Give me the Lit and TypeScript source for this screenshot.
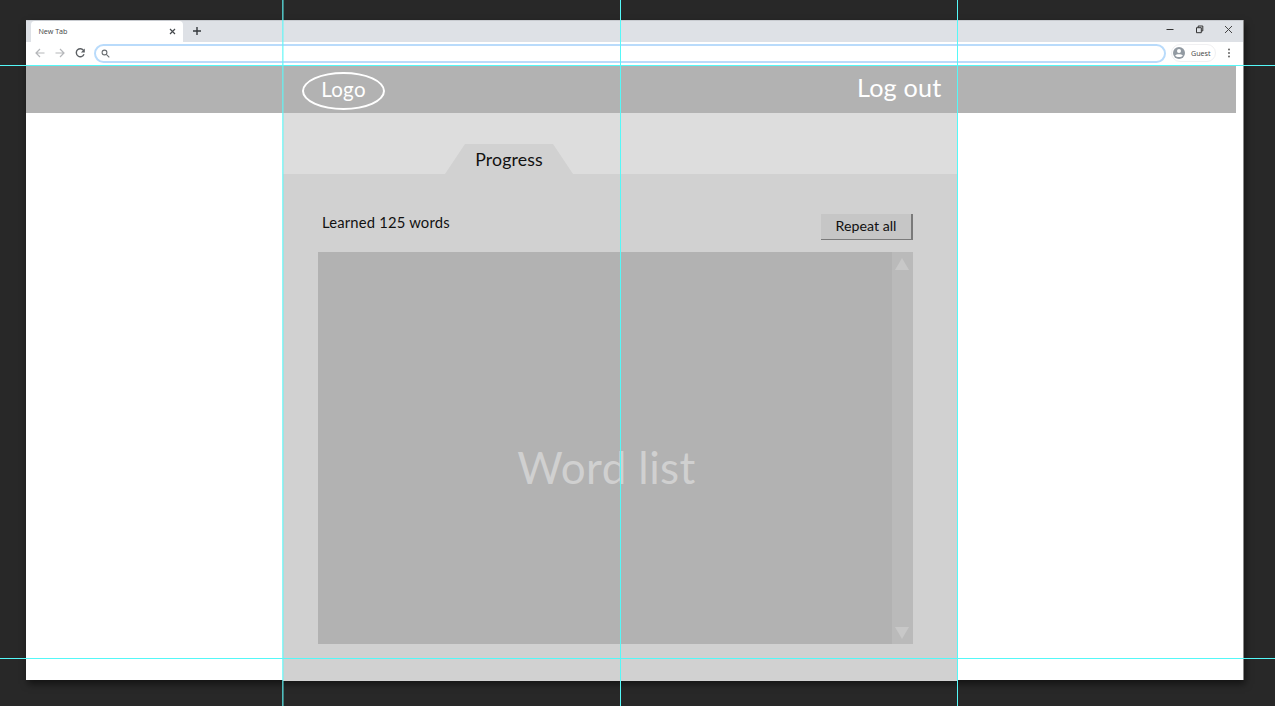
import { LitElement, html, css } from "lit";
import { customElement } from "lit/decorators.js";

@customElement("browser-chrome")
class BrowserChrome extends LitElement {
  static styles = css`
    :host { display: block; font-family: "Open Sans", sans-serif; color: #444; }
    svg { display: block; fill: none; flex: none; }
    .strip { height: 21.5px; box-sizing: border-box; background: #dee1e6; display: flex; padding: 0 10px 0 5px; border-top: 1px solid #c8cbd0; }
    .tab { width: 152px; box-sizing: border-box; background: #fff; border-radius: 4px 4px 0 0; display: flex; align-items: center; justify-content: space-between; padding: 0 7px 0 7.5px; font-size: 7.2px; letter-spacing: -0.05px; }
    .plus { margin: 6px 0 0 10px; }
    .controls { margin-left: auto; display: flex; padding-top: 4px; gap: 20.5px; }
    .bar { height: 23.5px; box-sizing: border-box; display: flex; align-items: center; padding: 0 0 0.5px 8.5px; background: #fff; }
    .nav { display: flex; gap: 10px; }
    .address { width: 1072px; height: 19px; box-sizing: border-box; border: 2px solid #b9dbfb; border-radius: 10px; margin-left: 8px; display: flex; align-items: center; padding-left: 5px; }
    .guest { width: 45px; height: 18px; box-sizing: border-box; border: 1px solid #f0f0f2; border-radius: 9px; display: flex; align-items: center; gap: 6px; margin-left: 5.5px; padding-left: 1px; font-size: 7.2px; letter-spacing: -0.05px; }
    .menu { margin-left: 11px; }
  `;
  render() {
    return html`
      <div class="strip">
        <div class="tab"><span>New Tab</span>
          <svg width="7" height="7" stroke="#45494d" stroke-width="1.2"><path d="M1 1l5 5M6 1l-5 5" /></svg>
        </div>
        <svg class="plus" width="8" height="8" stroke="#35393d" stroke-width="1.4"><path d="M4 0v8M0 4h8" /></svg>
        <div class="controls">
          <svg width="9" height="9" stroke="#333"><path d="M1.5 4.5h7" /></svg>
          <svg width="9" height="9" stroke="#333"><path d="M1.5 2.7h4.8v5h-4.8zM3.2 2.5V1h4.6v4.9H6.4" /></svg>
          <svg width="9" height="9" stroke="#444"><path d="M1 1l7 7M8 1L1 8" /></svg>
        </div>
      </div>
      <div class="bar">
        <div class="nav">
          <svg width="10" height="10" stroke="#b5b7ba" stroke-width="1.2"><path d="M9.5 5H1M5 1L1 5l4 4" /></svg>
          <svg width="10" height="10" stroke="#b5b7ba" stroke-width="1.2"><path d="M.5 5H9M5 1l4 4-4 4" /></svg>
          <svg width="11" height="10" stroke="#5c6064" stroke-width="1.4"><path d="M8.7 2.6A4 4 0 1 0 9 6.3" /><path d="M9.8 .5v4H5.9z" fill="#5c6064" stroke="none" /></svg>
        </div>
        <div class="address">
          <svg width="9" height="9" stroke="#686c70" stroke-width="1.1"><circle cx="3.5" cy="3.5" r="2.4" /><path d="M5.3 5.3l3 3" /></svg>
        </div>
        <div class="guest">
          <svg width="12" height="12"><circle cx="6" cy="6" r="6" fill="#929aa2" /><circle cx="6" cy="4.1" r="2" fill="#fff" /><path d="M2.2 8.6C3.2 6.9 8.8 6.9 9.8 8.6 8.5 10.6 3.5 10.6 2.2 8.6z" fill="#fff" /></svg>
          <span>Guest</span>
        </div>
        <svg class="menu" width="4" height="10"><circle cx="2" cy="1.5" r=".9" fill="#555" /><circle cx="2" cy="5" r=".9" fill="#555" /><circle cx="2" cy="8.5" r=".9" fill="#555" /></svg>
      </div>
    `;
  }
}

@customElement("progress-page")
class ProgressPage extends LitElement {
  static styles = css`
    :host { display: block; font-family: Lato, sans-serif; color: #111; }
    svg { display: block; }
    .header { width: 1210px; height: 48px; box-sizing: border-box; background: #b2b2b2; color: #fff; display: flex; justify-content: space-between; padding: 7px 294.5px 0 276px; }
    .logo { width: 83px; height: 38px; box-sizing: border-box; border: 2px solid #fff; border-radius: 50%; font-size: 20.5px; line-height: 30px; letter-spacing: 0.3px; text-align: center; }
    .logout { font-size: 25.2px; line-height: 31px; letter-spacing: 0.2px; white-space: nowrap; }
    .content { width: 675px; height: 568px; margin-left: 257px; background: #d1d1d1; }
    .tabs { height: 61px; background: #ddd; padding-left: 162px; box-sizing: border-box; padding-top: 31px; }
    .tab { width: 128px; height: 30px; background: #d1d1d1; clip-path: polygon(20px 0, 108px 0, 100% 100%, 0 100%); text-align: center; font-size: 17.7px; letter-spacing: 0.15px; line-height: 31px; }
    .body { padding: 40px 45px 0 35px; }
    .row { height: 38px; display: flex; justify-content: space-between; align-items: flex-start; }
    .learned { font-size: 14.8px; letter-spacing: 0.18px; line-height: 16px; padding-left: 4px; white-space: nowrap; }
    .repeat { width: 92px; height: 26px; box-sizing: border-box; border: 0 solid #7a7a7a; border-width: 0 2px 1.5px 0; background: #c6c6c6; font-size: 14.2px; line-height: 24px; text-align: center; white-space: nowrap; }
    .list { height: 392px; display: flex; background: #b2b2b2; }
    .words { flex: 1; display: flex; align-items: center; justify-content: center; font-size: 44px; letter-spacing: 0.4px; color: #d0d0d0; padding: 37px 0 0 3px; white-space: nowrap; }
    .scroll { width: 21px; box-sizing: border-box; background: #bababa; display: flex; flex-direction: column; justify-content: space-between; align-items: center; padding: 6px 1px 5px 0; }
  `;
  render() {
    return html`
      <div class="header"><div class="logo">Logo</div><div class="logout">Log out</div></div>
      <div class="content">
        <div class="tabs"><div class="tab">Progress</div></div>
        <div class="body">
          <div class="row"><div class="learned">Learned 125 words</div><div class="repeat">Repeat all</div></div>
          <div class="list">
            <div class="words">Word list</div>
            <div class="scroll">
              <svg width="14" height="12"><path d="M7 0l7 12H0z" fill="#c8c8c8" /></svg>
              <svg width="14" height="12"><path d="M0 0h14L7 12z" fill="#c8c8c8" /></svg>
            </div>
          </div>
        </div>
      </div>
    `;
  }
}

@customElement("app-root")
class AppRoot extends LitElement {
  static styles = css`
    :host { display: block; position: relative; width: 1275px; height: 706px; overflow: hidden; background: #282828; box-sizing: border-box; padding: 20px 0 0 26px; }
    .window { width: 1217px; height: 660px; background: #fff; box-shadow: 1px 0 0 #888, 2px 4px 7px #0008; }
    .guide { position: absolute; background: #55f8f8; }
    .h { left: 0; right: 0; height: 1px; }
    .v { top: 0; bottom: 0; width: 1px; }
    .top { top: 65px; }
    .bottom { top: 658px; }
    .left { left: 282px; width: 2px; background: linear-gradient(90deg, #5ff6f6b8 50%, #5ff6f670 50%); }
    .mid { left: 620px; }
    .right { left: 957px; }
  `;
  render() {
    return html`
      <div class="window"><browser-chrome></browser-chrome><progress-page></progress-page></div>
      <div class="guide h top"></div><div class="guide h bottom"></div>
      <div class="guide v left"></div><div class="guide v mid"></div><div class="guide v right"></div>
    `;
  }
}
